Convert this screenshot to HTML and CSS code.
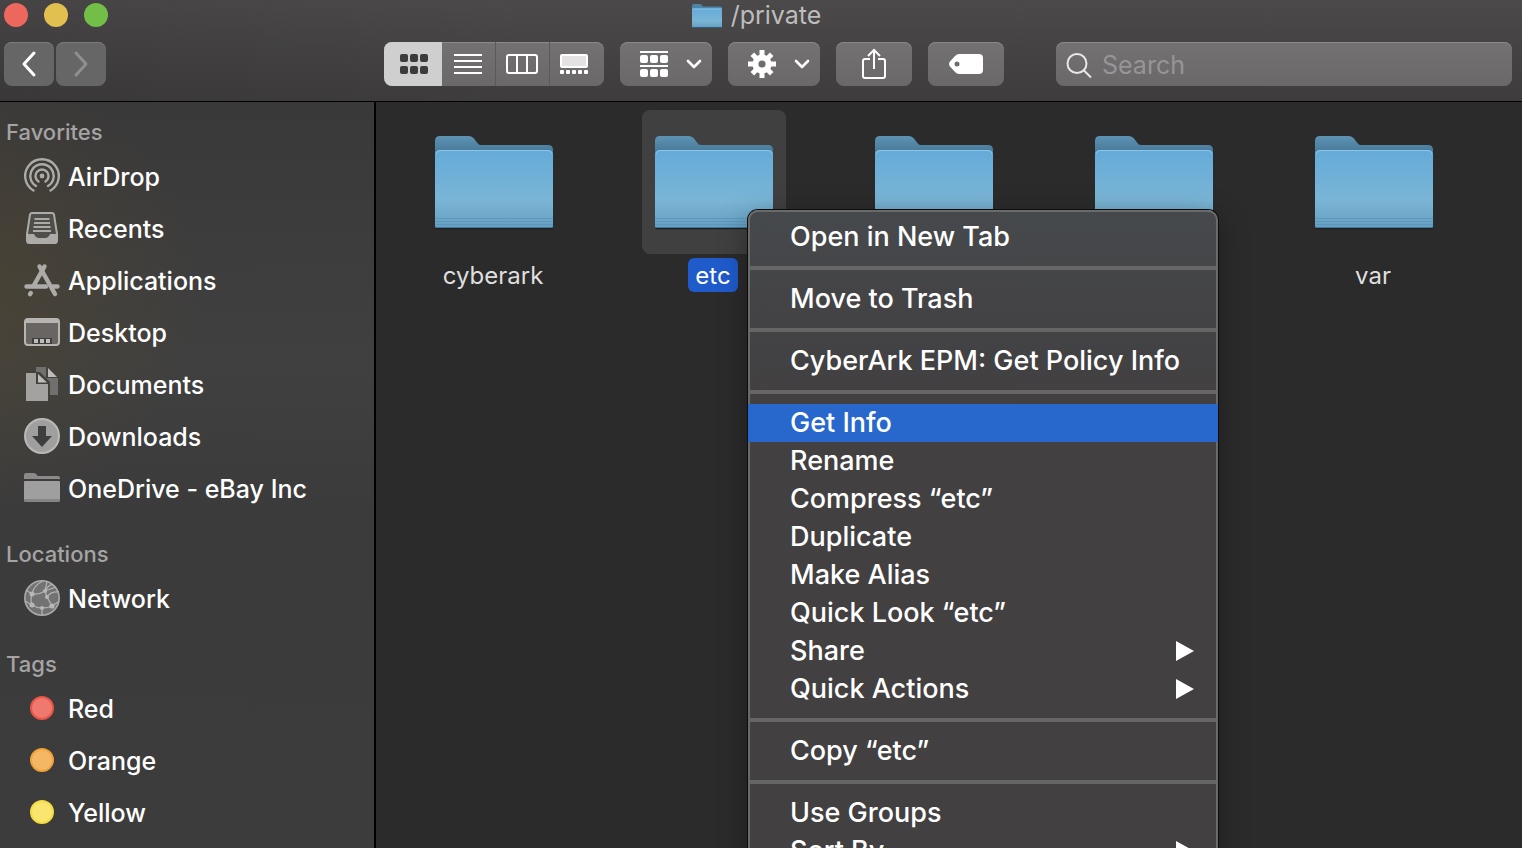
FILE: index.html
```html
<!DOCTYPE html>
<html lang="en">
<head>
<meta charset="utf-8">
<title>/private</title>
<link rel="stylesheet" href="styles.css">
</head>
<body>
<svg class="defs" aria-hidden="true">
  <defs>
    <linearGradient id="front" x1="0" y1="0" x2="0" y2="1">
      <stop offset="0" stop-color="#65abd9"/>
      <stop offset="0.65" stop-color="#7ab5d6"/>
      <stop offset="0.85" stop-color="#6fa9ca"/>
      <stop offset="1" stop-color="#649fc2"/>
    </linearGradient>
    <linearGradient id="back" x1="0" y1="0" x2="0" y2="1">
      <stop offset="0" stop-color="#5e93b3"/>
      <stop offset="0.16" stop-color="#4b7c9c"/>
    </linearGradient>
    <symbol id="folder" viewBox="0 0 120 96">
      <path d="M1 90V7Q1 2 6 2H35Q38 2 40 4.500L43 8.500Q44.500 11 47 11H114Q119 11 119 16V90Z" fill="url(#back)"/>
      <path d="M1.500 94.500H118.500" stroke="#1c1f21" stroke-width="1.500"/>
      <path d="M1 21Q1 16 6 16H114Q119 16 119 21V92Q119 94 117 94H3Q1 94 1 92Z" fill="url(#front)"/>
      <path d="M2 20Q2.500 16.500 6 16.500H114Q117.500 16.500 118 20" fill="none" stroke="#8bc6e8"/>
      <path d="M1 84.500H119M1 87.500H119M1 90.500H119" stroke="#5b98bc"/>
      <path d="M1.500 93.500H118.500" stroke="#437897"/>
    </symbol>
    <symbol id="chevron" viewBox="0 0 16 10">
      <path d="M2 2L8 8L14 2" fill="none" stroke="#fff" stroke-width="2.600" stroke-linecap="round" stroke-linejoin="round"/>
    </symbol>
  </defs>
</svg>

<div class="window">
  <header class="header">
    <div class="titlebar">
      <div class="lights">
        <button class="light light-close" aria-label="Close"></button>
        <button class="light light-min" aria-label="Minimize"></button>
        <button class="light light-zoom" aria-label="Zoom"></button>
      </div>
      <h1 class="title"><svg class="title-icon" viewBox="0 0 32 26" aria-hidden="true">
        <path d="M1 20V4Q1 2 3 2H9Q10 2 11 3.500Q11.500 4.500 13 4.500H29Q31 4.500 31 6V20Z" fill="#4d85a6"/>
        <rect x="1" y="6.500" width="30" height="19" rx="1" fill="url(#front)"/>
        <path d="M1.500 7H30.500" stroke="#85c4e8"/>
        <path d="M1 25.500H31" stroke="#315d78"/>
      </svg>/private</h1>
    </div>
    <div class="toolbar">
      <div class="nav">
        <button class="btn btn-nav" aria-label="Back"><svg width="16" height="28" viewBox="0 0 16 28"><path d="M13 3L3 14L13 25" fill="none" stroke="#fff" stroke-width="3" stroke-linecap="round" stroke-linejoin="round"/></svg></button>
        <button class="btn btn-nav" aria-label="Forward"><svg width="16" height="28" viewBox="0 0 16 28"><path d="M3 3L13 14L3 25" fill="none" stroke="#8f8f8f" stroke-width="3" stroke-linecap="round" stroke-linejoin="round"/></svg></button>
      </div>
      <div class="tools">
        <div class="segments">
          <button class="segment segment-on" aria-label="Icon view"><svg width="28" height="20" viewBox="0 0 28 20" fill="#3c3c3c"><rect width="8" height="8" rx="2"/><rect x="10" width="8" height="8" rx="2"/><rect x="20" width="8" height="8" rx="2"/><rect y="12" width="8" height="8" rx="2"/><rect x="10" y="12" width="8" height="8" rx="2"/><rect x="20" y="12" width="8" height="8" rx="2"/></svg></button>
          <button class="segment" aria-label="List view"><svg width="28" height="20" viewBox="0 0 28 20"><path d="M0 1H28M0 7H28M0 13H28M0 19H28" stroke="#fff" stroke-width="2"/></svg></button>
          <button class="segment" aria-label="Column view"><svg width="32" height="20" viewBox="0 0 32 20"><path d="M1 3Q1 1 3 1H29Q31 1 31 3V17Q31 19 29 19H3Q1 19 1 17ZM11 1V19M21 1V19" fill="none" stroke="#fff" stroke-width="2"/></svg></button>
          <button class="segment" aria-label="Gallery view"><svg width="28" height="20" viewBox="0 0 28 20" fill="#fff"><rect x="1" y="1" width="26" height="12" rx="1" fill="#e4e2e3" stroke="#fff" stroke-width="2"/><rect y="16" width="4" height="4" rx="1"/><rect x="6" y="16" width="4" height="4" rx="1"/><rect x="12" y="16" width="4" height="4" rx="1"/><rect x="18" y="16" width="4" height="4" rx="1"/><rect x="24" y="16" width="4" height="4" rx="1"/></svg></button>
        </div>
        <button class="btn btn-menu" aria-label="Group items"><svg width="28" height="26" viewBox="0 0 28 26" fill="#fff"><rect width="28" height="2"/><rect y="4" width="8" height="8" rx="2"/><rect x="10" y="4" width="8" height="8" rx="2"/><rect x="20" y="4" width="8" height="8" rx="2"/><rect y="14" width="28" height="2"/><rect y="18" width="8" height="8" rx="2"/><rect x="10" y="18" width="8" height="8" rx="2"/><rect x="20" y="18" width="8" height="8" rx="2"/></svg><svg width="16" height="10"><use href="#chevron"/></svg></button>
        <button class="btn btn-menu" aria-label="Actions"><svg width="28" height="28" viewBox="-14 -14 28 28">
          <g stroke="#fff" stroke-width="5"><path d="M0 -14V-7M0 14V7M-14 0H-7M14 0H7M-9.700 -9.700L-5 -5M9.700 9.700L5 5M-9.700 9.700L-5 5M9.700 -9.700L5 -5"/></g>
          <circle r="6.600" fill="none" stroke="#fff" stroke-width="6"/></svg><svg width="16" height="10"><use href="#chevron"/></svg></button>
        <button class="btn btn-wide" aria-label="Share"><svg width="24" height="32" viewBox="0 0 24 32" fill="none" stroke="#fff" stroke-width="2"><path d="M8 11H3Q1 11 1 13V28Q1 30 3 30H21Q23 30 23 28V13Q23 11 21 11H16M12 21V2M6 8L12 2L18 8"/></svg></button>
        <button class="btn btn-wide" aria-label="Edit tags"><svg width="34" height="20" viewBox="0 0 34 20"><path fill="#fff" fill-rule="evenodd" d="M10 0H30Q34 0 34 4V16Q34 20 30 20H10Q8 20 6 18L1 12.500Q-1 10 1 7.500L6 2Q8 0 10 0ZM8 7.500A2.500 2.500 0 1 0 8 12.500A2.500 2.500 0 1 0 8 7.500Z"/></svg></button>
      </div>
      <label class="search"><svg width="26" height="26" viewBox="0 0 26 26" fill="none" stroke="#e9e9e9" stroke-width="2"><circle cx="11" cy="11.500" r="9.500"/><path d="M17.500 18L25 25.500"/></svg><input class="search-input" type="search" placeholder="Search" aria-label="Search"></label>
    </div>
  </header>

  <div class="body">
    <nav class="sidebar">
      <h2 class="heading">Favorites</h2>
      <a class="item" href="#"><svg class="icon" viewBox="0 0 36 36" fill="none" stroke="#adaba8" stroke-width="2.400" stroke-linecap="round"><circle cx="18" cy="18" r="2.400" fill="#adaba8" stroke="none"/><path d="M14.500 23.500A6.500 6.500 0 1 1 21.500 23.500M12 28A11.700 11.700 0 1 1 24 28M9.500 32.500A16.800 16.800 0 1 1 26.500 32.500"/></svg>AirDrop</a>
      <a class="item" href="#"><svg class="icon" viewBox="0 0 36 36"><path d="M8 3H28Q29.500 3 30 4.500L33 24V30Q33 33 31 33H5Q3 33 3 30V24L6 4.500Q6.500 3 8 3Z" fill="#504e4b" stroke="#adaba8" stroke-width="2"/><path d="M10.500 9H25.500M10 13H26M9.500 17H26.500M9 21H27" stroke="#adaba8" stroke-width="2"/><path d="M3 24H10Q11.500 28 15 28H21Q24.500 28 26 24H33V31Q33 33 31 33H5Q3 33 3 31Z" fill="#adaba8"/></svg>Recents</a>
      <a class="item" href="#"><svg class="icon" viewBox="0 0 36 36" fill="none" stroke="#adaba8" stroke-width="4.400" stroke-linecap="round"><path d="M20.500 4.500L9.500 24M2.500 24.500H22M29 24.500H33.500M6.800 31L6 32.200"/><path d="M15.500 4.500L31 32"/></svg>Applications</a>
      <a class="item" href="#"><svg class="icon" viewBox="0 0 36 36"><rect x="1" y="5" width="34" height="26" rx="3" fill="#686562" stroke="#b7b5b1" stroke-width="2"/><path d="M1 7Q1 5 4 5H32Q35 5 35 7V9H1Z" fill="#b7b5b1"/><rect x="8" y="24" width="20" height="6" fill="#403f3d"/><path d="M10 25H14V29H10ZM16 25H20V29H16ZM22 25H26V29H22Z" fill="#bebcba"/></svg>Desktop</a>
      <a class="item" href="#"><svg class="icon" viewBox="0 0 36 36"><path d="M12 1H22V12H34V29H26V16L16 6H12Z" fill="#71706e"/><path d="M24 2L33 11H24Z" fill="#bebdbb"/><path d="M2 7H12V18H24V35H2Z" fill="#a3a2a0"/><path d="M14 8L23 16.500H14Z" fill="#bebdbb"/></svg>Documents</a>
      <a class="item" href="#"><svg class="icon" viewBox="0 0 36 36"><circle cx="18" cy="18" r="17" fill="#a09f9f" stroke="#bbb9b8" stroke-width="2"/><path d="M14 8H22V18H28L18 29L8 18H14Z" fill="#3e3e3e"/></svg>Downloads</a>
      <a class="item" href="#"><svg class="icon" viewBox="0 0 36 36"><path d="M0 9V5Q0 3 2 3H10Q12 3 12.500 4.500Q13 6 15 6H34Q36 6 36 8V9Z" fill="#8b8989"/><path d="M0 12Q0 11 1 11H35Q36 11 36 12V30Q36 32 34 32H2Q0 32 0 30Z" fill="#a09f9f"/><path d="M0 29H36V30Q36 32 34 32H2Q0 32 0 30Z" fill="#868585"/></svg>OneDrive - eBay Inc</a>
      <h2 class="heading heading-next">Locations</h2>
      <a class="item" href="#"><svg class="icon" viewBox="0 0 36 36"><circle cx="18" cy="18" r="17.200" fill="#737272" stroke="#aaa9a9" stroke-width="1.600"/><g fill="none" stroke="#b2b1b1" stroke-width="1.300"><path d="M2 10L8 14Q15 15 21 11L32 7M23 1Q22 7 21 11L23 17L28 26M8 14Q10 5 19 1M8 14Q6 20 8 25M1 21L8 25Q13 28 18 28Q24 28 28 26L34 22M18 28V35M23 17Q27 11 35 12M21 11Q26 3 29 5"/></g><g fill="#b8b7b7"><circle cx="8" cy="14" r="2.500"/><circle cx="21" cy="11" r="2"/><circle cx="23" cy="17" r="2"/><circle cx="8" cy="25" r="2.500"/><circle cx="18" cy="28" r="2"/><circle cx="28" cy="26" r="2.600"/></g></svg>Network</a>
      <h2 class="heading heading-next">Tags</h2>
      <a class="item" href="#"><span class="tag tag-red"></span>Red</a>
      <a class="item" href="#"><span class="tag tag-orange"></span>Orange</a>
      <a class="item" href="#"><span class="tag tag-yellow"></span>Yellow</a>
    </nav>

    <main class="files">
      <figure class="file"><div class="tile"><svg class="folder" aria-hidden="true"><use href="#folder"/></svg></div><figcaption class="name">cyberark</figcaption></figure>
      <figure class="file file-on"><div class="tile"><svg class="folder" aria-hidden="true"><use href="#folder"/></svg></div><figcaption class="name">etc</figcaption></figure>
      <figure class="file"><div class="tile"><svg class="folder" aria-hidden="true"><use href="#folder"/></svg></div></figure>
      <figure class="file"><div class="tile"><svg class="folder" aria-hidden="true"><use href="#folder"/></svg></div></figure>
      <figure class="file"><div class="tile"><svg class="folder" aria-hidden="true"><use href="#folder"/></svg></div><figcaption class="name">var</figcaption></figure>
    </main>
  </div>

  <div class="menu" role="menu">
    <button class="command" role="menuitem">Open in New Tab</button>
    <hr class="rule">
    <button class="command" role="menuitem">Move to Trash</button>
    <hr class="rule">
    <button class="command" role="menuitem">CyberArk EPM: Get Policy Info</button>
    <hr class="rule">
    <button class="command command-on" role="menuitem">Get Info</button>
    <button class="command" role="menuitem">Rename</button>
    <button class="command" role="menuitem">Compress “etc”</button>
    <button class="command" role="menuitem">Duplicate</button>
    <button class="command" role="menuitem">Make Alias</button>
    <button class="command" role="menuitem">Quick Look “etc”</button>
    <button class="command" role="menuitem">Share<svg class="more" viewBox="0 0 18 22"><path d="M0 2L18 12L0 22Z" fill="#fff"/></svg></button>
    <button class="command" role="menuitem">Quick Actions<svg class="more" viewBox="0 0 18 22"><path d="M0 2L18 12L0 22Z" fill="#fff"/></svg></button>
    <hr class="rule">
    <button class="command" role="menuitem">Copy “etc”</button>
    <hr class="rule">
    <button class="command" role="menuitem">Use Groups</button>
    <button class="command" role="menuitem">Sort By<svg class="more" viewBox="0 0 18 22"><path d="M0 2L18 12L0 22Z" fill="#fff"/></svg></button>
  </div>
</div>
</body>
</html>
```

FILE: styles.css
```css
* {
  box-sizing: border-box;
}

body {
  margin: 0;
  background: #2b2b2b;
  color: #fff;
  font-family: Inter, "Liberation Sans", sans-serif;
}

button {
  padding: 0;
  border: 0;
  color: inherit;
  font: inherit;
}

svg {
  flex: none;
}

.defs {
  position: absolute;
  width: 0;
  height: 0;
}

.window {
  position: relative;
  display: flex;
  flex-direction: column;
  height: 100vh;
  overflow: hidden;
}

/* Title bar and toolbar */
.header {
  padding: 0 10px 15px 4px;
  border-bottom: 1px solid #000;
  background:
    linear-gradient(90deg, rgba(0, 0, 0, 0.08), transparent 35%),
    linear-gradient(#4b494a, #3e3c3d);
}

.titlebar {
  display: grid;
  grid-template-columns: 1fr auto 1fr;
  align-items: center;
  height: 28px;
}

.lights {
  display: flex;
  gap: 16px;
}

.light {
  width: 24px;
  height: 24px;
  border-radius: 50%;
}

.light-close {
  background: #ee675c;
}

.light-min {
  background: #e1c04f;
}

.light-zoom {
  background: #72be47;
}

.title {
  display: flex;
  align-items: center;
  gap: 8px;
  margin: 0;
  padding-right: 4px;
  color: #bebdbd;
  font-size: 25px;
  font-weight: 400;
  line-height: 30px;
}

.title-icon {
  width: 32px;
  height: 26px;
}

.toolbar {
  display: flex;
  margin-top: 14px;
}

.nav {
  display: flex;
  gap: 2px;
}

.tools {
  display: flex;
  gap: 16px;
  margin: 0 52px 0 278px;
}

.btn,
.segments,
.search {
  height: 44px;
  border-radius: 8px;
  background: linear-gradient(#737172, #6a6869);
  box-shadow: inset 0 1px #8a8889;
}

.btn {
  display: flex;
  align-items: center;
  justify-content: center;
}

.btn-nav {
  width: 50px;
  background: #666;
  box-shadow: inset 0 1px #7c7c7c;
}

.btn-menu {
  gap: 18px;
  width: 92px;
  padding-left: 10px;
}

.btn-wide {
  width: 76px;
}

.segments {
  display: flex;
  overflow: hidden;
}

.segment {
  display: flex;
  align-items: center;
  justify-content: center;
  width: 54px;
  padding-right: 2px;
  border-right: 1px solid #5b595a;
  background: none;
}

.segment:last-child {
  padding-right: 6px;
  border-right: 0;
}

.segment-on {
  width: 58px;
  padding: 0 0 0 2px;
  border-right: 0;
  background: #cfcfcf;
}

.search {
  display: flex;
  flex: 1;
  align-items: center;
  gap: 10px;
  padding: 2px 10px 0;
}

.search-input {
  flex: 1;
  min-width: 0;
  padding: 0;
  border: 0;
  outline: 0;
  background: none;
  color: #fff;
  font: 400 25px Inter, "Liberation Sans", sans-serif;
}

.search-input::placeholder {
  color: #979596;
}

.body {
  display: flex;
  flex: 1;
  min-height: 0;
}

/* Sidebar */
.sidebar {
  flex: none;
  width: 376px;
  padding-top: 11px;
  overflow: hidden;
  border-right: 2px solid #000;
  background:
    radial-gradient(ellipse 240px 220px at -40px 190px, rgba(90, 75, 40, 0.4), transparent),
    linear-gradient(#3a3939, #404040 35%, #3c3b3b 55%, #3d3c3c);
}

.heading {
  margin: 0;
  padding-left: 6px;
  color: #a5a4a4;
  font-size: 22px;
  font-weight: 500;
  line-height: 38px;
}

.heading-next {
  margin-top: 20px;
}

.item {
  display: flex;
  align-items: center;
  gap: 8px;
  height: 52px;
  padding-left: 24px;
  color: #fff;
  font-size: 25px;
  font-weight: 500;
  text-decoration: none;
}

.icon {
  width: 36px;
  height: 36px;
  margin-bottom: 2px;
}

.tag {
  width: 24px;
  height: 24px;
  margin: 0 6px 2px;
  border: 2px solid;
  border-radius: 50%;
}

.tag-red {
  border-color: #eb5548;
  background: #f0796f;
}

.tag-orange {
  border-color: #f2a23a;
  background: #f4b763;
}

.tag-yellow {
  border-color: #f5dc45;
  background: #fae56e;
}

/* Folder grid */
.files {
  display: grid;
  flex: 1;
  grid-template-columns: repeat(auto-fill, 220px);
  align-content: start;
  padding: 8px 0 0 8px;
}

.file {
  display: flex;
  flex-direction: column;
  align-items: center;
  gap: 4px;
  margin: 0;
}

.tile {
  display: flex;
  align-items: center;
  justify-content: center;
  width: 144px;
  height: 144px;
  border-radius: 8px;
}

.folder {
  width: 120px;
  height: 96px;
}

.name {
  margin-right: 2px;
  padding: 1px 7px 0;
  border-radius: 6px;
  color: #dfdfdf;
  font-size: 24px;
  line-height: 33px;
}

.file-on .tile {
  background: #404040;
}

.file-on .name {
  background: #1f5bcb;
  color: #fff;
}

/* Context menu */
.menu {
  position: absolute;
  top: 210px;
  left: 748px;
  width: 470px;
  padding: 6px 0;
  border: 2px solid #6b6a6b;
  border-radius: 10px;
  background: linear-gradient(#46494c, #434244 120px, #424041 200px);
  box-shadow: 0 0 0 1px #0c0c0c, 0 8px 30px rgba(0, 0, 0, 0.35);
}

.command {
  display: flex;
  align-items: center;
  justify-content: space-between;
  width: 100%;
  height: 38px;
  padding: 0 22px 2px 40px;
  background: none;
  font-size: 27px;
  font-weight: 500;
  text-align: left;
}

.command-on {
  width: auto;
  min-width: calc(100% + 4px);
  margin: 0 -2px;
  padding-left: 42px;
  background: #2868cd;
}

.rule {
  height: 4px;
  margin: 10px 0;
  border: 0;
  background: #676667;
}

.more {
  width: 18px;
  height: 22px;
}
```
